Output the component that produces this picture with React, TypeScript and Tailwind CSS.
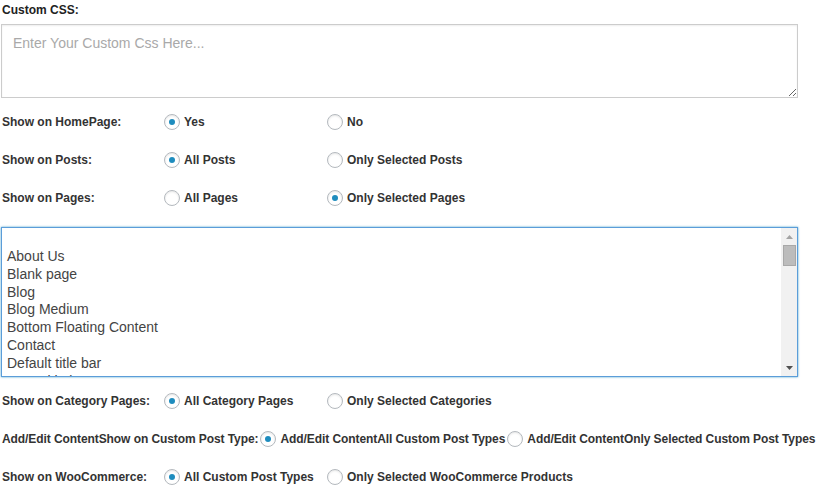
import React from 'react';

const font = { fontFamily: '"Liberation Sans", Arial, sans-serif' };

const Radio = ({ checked }: { checked?: boolean }) => (
  <span className="inline-flex h-4 w-4 shrink-0 items-center justify-center rounded-full border border-[#b4b9be] bg-white shadow-[inset_0_1px_2px_rgba(0,0,0,0.1)] align-middle">
    {checked && <span className="h-[6px] w-[6px] rounded-full bg-[#1e8cbe]" />}
  </span>
);

type Option = { label: string; checked?: boolean };

const Row = ({ label, options }: { label: string; options: Option[] }) => (
  <div className="flex h-[38px] items-center whitespace-nowrap">
    <div className="w-[164px] shrink-0 pl-[2px]">{label}</div>
    {options.map((o, i) => (
      <label
        key={o.label}
        className={`flex items-center gap-1 ${i === 0 ? 'w-[163px] shrink-0' : ''}`}
      >
        <Radio checked={o.checked} />
        <span>{o.label}</span>
      </label>
    ))}
  </div>
);

const pages = [
  '',
  'About Us',
  'Blank page',
  'Blog',
  'Blog Medium',
  'Bottom Floating Content',
  'Contact',
  'Default title bar',
  'Front title bar',
];

export default function App() {
  return (
    <div className="min-h-[499px] w-[831px] bg-white text-[12px] font-bold text-[#333]" style={font}>
      <div className="flex h-[24px] items-start pl-[2px] pt-[3px] leading-[14px] text-[#222]">Custom CSS:</div>
      <textarea
        className="ml-px block h-[74px] w-[797px] border border-[#cccccc] px-[11px] py-[10px] text-[14px] font-normal leading-[16px] text-[#333] shadow-[inset_0_1px_2px_rgba(0,0,0,0.07)] outline-none placeholder:text-[#a9a9a9]"
        style={font}
        placeholder="Enter Your Custom Css Here..."
      />
      <div className="mt-[5px]">
        <Row label="Show on HomePage:" options={[{ label: 'Yes', checked: true }, { label: 'No' }]} />
        <Row label="Show on Posts:" options={[{ label: 'All Posts', checked: true }, { label: 'Only Selected Posts' }]} />
        <Row label="Show on Pages:" options={[{ label: 'All Pages' }, { label: 'Only Selected Pages', checked: true }]} />
      </div>

      <div className="ml-px mt-[10px] flex h-[150px] w-[797px] overflow-hidden border border-[#5b9dd9] shadow-[0_0_2px_rgba(30,140,190,0.8)]">
        <div className="flex-1 overflow-hidden pl-[5px] pt-[2px] text-[14px] font-normal text-[#444]">
          {pages.map((p, i) => (
            <div key={i} className="h-[17.85px] leading-[17.85px] whitespace-nowrap">
              {p}
            </div>
          ))}
        </div>
        <div className="flex w-[16px] flex-col items-center bg-[#f1f1f1]">
          <div className="flex h-[17px] w-full items-center justify-center">
            <svg width="7" height="4" viewBox="0 0 7 4">
              <path d="M0 4 L3.5 0 L7 4 Z" fill="#a3a3a3" />
            </svg>
          </div>
          <div className="h-[21px] w-[13px] border border-[#a8a8a8] bg-[#bcbcbc]" />
          <div className="flex-1" />
          <div className="flex h-[17px] w-full items-center justify-center">
            <svg width="7" height="4" viewBox="0 0 7 4">
              <path d="M0 0 L7 0 L3.5 4 Z" fill="#505050" />
            </svg>
          </div>
        </div>
      </div>

      <div className="mt-[5px]">
        <Row
          label="Show on Category Pages:"
          options={[{ label: 'All Category Pages', checked: true }, { label: 'Only Selected Categories' }]}
        />
        <div className="flex h-[38px] items-center whitespace-nowrap pl-[2px] tracking-[-0.08px]">
          <span>Add/Edit ContentShow on Custom Post Type:</span>
          <span className="ml-[2px] mr-[4px] flex">
            <Radio checked />
          </span>
          <span>Add/Edit ContentAll Custom Post Types</span>
          <span className="ml-[2px] mr-[4px] flex">
            <Radio />
          </span>
          <span>Add/Edit ContentOnly Selected Custom Post Types</span>
        </div>
        <Row
          label="Show on WooCommerce:"
          options={[{ label: 'All Custom Post Types', checked: true }, { label: 'Only Selected WooCommerce Products' }]}
        />
      </div>
    </div>
  );
}
